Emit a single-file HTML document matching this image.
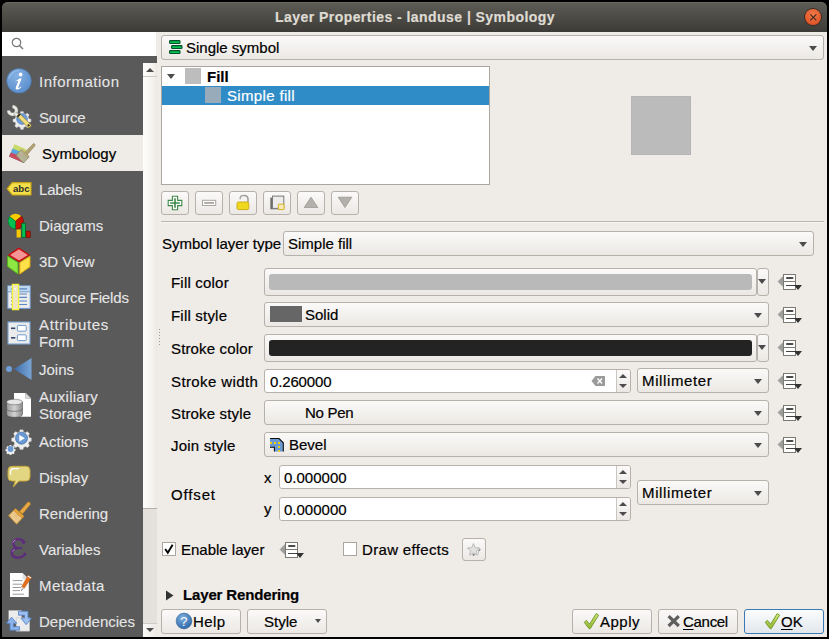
<!DOCTYPE html>
<html><head><meta charset="utf-8">
<style>
html,body{margin:0;padding:0;}
body{width:829px;height:639px;background:#000;position:relative;overflow:hidden;font-family:"Liberation Sans",sans-serif;font-size:15px;color:#000;}
.a{position:absolute;}
.t{position:absolute;line-height:20px;white-space:nowrap;-webkit-text-stroke:0.2px currentColor;}
.st{position:absolute;line-height:20px;white-space:nowrap;color:#e6e6e6;-webkit-text-stroke:0.1px currentColor;}
.btn{position:absolute;box-sizing:border-box;border:1px solid #b6b1aa;border-radius:3px;background:linear-gradient(#fbfaf9,#ebe8e4);}
.fld{position:absolute;box-sizing:border-box;border:1px solid #b6b1aa;border-radius:3px;background:#fff;}
.dd{position:absolute;width:0;height:0;border-left:4px solid transparent;border-right:4px solid transparent;border-top:5px solid #4c4c4c;}
u{text-underline-offset:2px;text-decoration-thickness:1px;}
.du{position:absolute;width:0;height:0;border-left:4px solid transparent;border-right:4px solid transparent;border-bottom:5px solid #4c4c4c;}
</style></head><body>
<div class="a" style="left:2px;top:20px;width:825px;height:617px;background:#efebe7;"></div>
<div class="a" style="left:2px;top:2px;width:825px;height:30px;background:linear-gradient(#5e5c55,#3c3b37);border-radius:6px 6px 0 0;box-shadow:inset 0 1px 0 #6a6860;"></div>
<div class="t" style="left:275px;top:7px;font-weight:bold;font-size:14px;letter-spacing:0.45px;color:#dfdbd2;">Layer Properties - landuse | Symbology</div>
<div class="a" style="left:804.5px;top:8.7px;width:16.6px;height:16.6px;border-radius:50%;background:radial-gradient(circle at 50% 35%,#f07a4a,#d9461a);box-shadow:0 0 0 1px #3a2a22;"></div>
<svg class="a" style="left:804.5px;top:8.7px" width="17" height="17"><path d="M5.3 5.3L11.3 11.3M11.3 5.3L5.3 11.3" stroke="#3b2a1f" stroke-width="1.1"/></svg>
<div class="a" style="left:2px;top:32px;width:154px;height:24px;background:#fff;"></div>
<svg class="a" style="left:11px;top:37px" width="14" height="14"><circle cx="5.5" cy="5.5" r="4.2" fill="none" stroke="#777" stroke-width="1.2"/><path d="M8.5 8.5L12 12" stroke="#777" stroke-width="1.5"/></svg>
<div class="a" style="left:2px;top:56px;width:155px;height:581px;background:#5a5a5a;"></div>

<div class="st" style="left:39px;top:72px;letter-spacing:0.5px">Information</div>
<svg class="a" style="left:4px;top:66px" width="32" height="32" viewBox="0 0 32 32"><defs><radialGradient id="gi" cx="40%" cy="30%" r="70%"><stop offset="0" stop-color="#86b1e3"/><stop offset="1" stop-color="#5b8fcd"/></radialGradient></defs>
<circle cx="15" cy="14.8" r="12.3" fill="url(#gi)" stroke="#4a78b0" stroke-width="0.6"/>
<path d="M5 13 A10 10 0 0 1 15 4.5" fill="none" stroke="#a9c8ee" stroke-width="1.2" opacity="0.8"/>
<circle cx="16.6" cy="8.5" r="1.9" fill="#fff"/>
<path d="M11.2 15.6 L15.6 12.6 L17.6 12.6 L14.3 21.2 Q14 22.4 15.2 21.8 L17.3 20.3 L17.1 21.4 Q14.6 23.8 12.4 23.6 Q11.2 23.3 11.8 21.5 L14.2 15.2 Q14 14.5 13 15 Z" fill="#fff"/></svg>
<div class="st" style="left:39px;top:108px;letter-spacing:-0.2px">Source</div>
<svg class="a" style="left:4px;top:102px" width="32" height="32" viewBox="0 0 32 32"><g transform="translate(18 17)"><path transform="scale(0.8)" d="M-1.6 -9.5h3.2l0.6 2.6 2.3 1 2.3-1.4 2.3 2.3-1.4 2.3 1 2.3 2.6 0.6v3.2l-2.6 0.6-1 2.3 1.4 2.3-2.3 2.3-2.3-1.4-2.3 1-0.6 2.6h-3.2l-0.6-2.6-2.3-1-2.3 1.4-2.3-2.3 1.4-2.3-1-2.3-2.6-0.6v-3.2l2.6-0.6 1-2.3-1.4-2.3 2.3-2.3 2.3 1.4 2.3-1z" fill="#ececec" stroke="#bdbdbd" stroke-width="0.5"/>
<circle r="5.4" fill="#6c9bd6" stroke="#4f7fbd" stroke-width="0.6"/></g>
<path d="M8.6 4.6 A3.9 3.9 0 1 1 4.6 8.6" fill="none" stroke="#9a9a94" stroke-width="3.6"/><path d="M8.6 4.6 A3.9 3.9 0 1 1 4.6 8.6" fill="none" stroke="#ecece6" stroke-width="2.6"/><path d="M10.8 10.8 L14 14" stroke="#9a9a94" stroke-width="3.6"/><path d="M10.8 10.8 L14 14" stroke="#e6e6e0" stroke-width="2.6"/>
<path d="M12.8 14.2 L15.6 11.4 L27.3 23.1 Q27 25.6 24.5 25.9 Z" fill="#f2dc7a" stroke="#8a7a35" stroke-width="0.7"/>
<path d="M12.8 14.2 L15.6 11.4 L16.8 12.6 L14 15.4Z" fill="#2a2a2a"/>
<circle cx="24.6" cy="23.4" r="1.1" fill="#222"/></svg>
<div class="a" style="left:2px;top:135px;width:141px;height:36px;background:#efebe7;"></div>
<div class="t" style="left:42px;top:144px;">Symbology</div>
<svg class="a" style="left:4px;top:138px" width="32" height="32" viewBox="0 0 32 32"><path d="M10.5 6.3 L22.5 11.5 L19.3 24.8 L5 18.5 Z" fill="#c9d96a"/>
<path d="M8.6 10.4 L21.4 15.8 L19.3 24.8 L5 18.5 Z" fill="#5ba6e0"/>
<path d="M6.9 14.4 L20.2 20 L19.3 24.8 L5 18.5 Z" fill="#cc4a5e"/>
<defs><pattern id="pchk" width="1.6" height="1.6" patternUnits="userSpaceOnUse" patternTransform="rotate(45)"><rect width="1.6" height="1.6" fill="#bcb99c"/><rect width="0.8" height="0.8" fill="#9e9b7e"/></pattern></defs><path d="M11.8 17.2 L17.2 11.8 L25.2 18.8 L19.4 25 Z" fill="url(#pchk)" stroke="#7e7a5c" stroke-width="0.7"/>
<path d="M16.5 12.5 L18 11 L25 17.8 L23.8 19.4Z" fill="#b5a777"/>
<path d="M21.2 14.2 L29.6 5.4 Q31.4 6 31 7.6 L23.6 16.2Z" fill="#b3a374" stroke="#8d7f52" stroke-width="0.6"/></svg>
<div class="st" style="left:39px;top:180px;letter-spacing:-0.2px">Labels</div>
<svg class="a" style="left:4px;top:174px" width="32" height="32" viewBox="0 0 32 32"><path d="M3.2 14.7 L8.3 8.6 H27 V21 H8.3 Z" fill="#f4df4a" stroke="#c9a514" stroke-width="1.1"/>
<text x="9" y="18" font-family="Liberation Sans" font-weight="bold" font-size="9.6" fill="#2b2b2b" letter-spacing="0">abc</text></svg>
<div class="st" style="left:39px;top:216px;letter-spacing:0px">Diagrams</div>
<svg class="a" style="left:4px;top:210px" width="32" height="32" viewBox="0 0 32 32"><path d="M11.5 11.2 L5.5 6.6 A8 8 0 0 1 17.6 6.2 Z" fill="#f8cc00"/>
<path d="M11.5 11.2 L17.6 6.2 A8 8 0 0 1 11.4 19.2 Z" fill="#c61200" stroke="#7a0a00" stroke-width="0.7"/>
<path d="M11.5 11.2 L11.4 19.2 A8 8 0 0 1 5.5 6.6 Z" fill="#00c050" stroke="#0a6a2a" stroke-width="0.7"/>
<rect x="12.6" y="19.5" width="4.2" height="8" fill="#f8c800"/>
<rect x="17.8" y="13.2" width="3.8" height="14.3" fill="#00c050" stroke="#0a5a28" stroke-width="0.8"/>
<rect x="22.2" y="21.2" width="4" height="6.3" fill="#c61200" stroke="#7a0a00" stroke-width="0.7"/></svg>
<div class="st" style="left:39px;top:252px;letter-spacing:0px">3D View</div>
<svg class="a" style="left:4px;top:246px" width="32" height="32" viewBox="0 0 32 32"><path d="M14.8 2.4 L25 9 L15 15.4 L5 9 Z" fill="#f49494" stroke="#cc0a0a" stroke-width="1.3"/>
<path d="M3.6 10.2 L14 16.5 V28 L3.6 20.5Z" fill="#8ee844" stroke="#55b015" stroke-width="1"/>
<path d="M15.8 16.5 L26 10.2 V20.8 L15.8 28Z" fill="#ffe24a" stroke="#d9a80c" stroke-width="1"/></svg>
<div class="st" style="left:39px;top:288px;letter-spacing:-0.15px">Source Fields</div>
<svg class="a" style="left:4px;top:282px" width="32" height="32" viewBox="0 0 32 32"><rect x="3.8" y="3.8" width="22.4" height="22.6" fill="#ececec" stroke="#6f9bd0" stroke-width="1"/>
<rect x="4.3" y="4.3" width="21.4" height="5.2" fill="#bcd8ee"/>
<path d="M4 9.8 H26" stroke="#6f9bd0" stroke-width="1"/>
<path d="M7 6.9H23M7 12H23M7 15.4H23M7 19H23M7 22.5H23" stroke="#5b86c2" stroke-width="1.1"/>
<rect x="8.4" y="2.4" width="6.2" height="25.2" fill="#efe6bf" stroke="#f8f43a" stroke-width="1.3"/>
<circle cx="11.4" cy="6.8" r="0.9" fill="#fff"/></svg>
<div class="st" style="left:39px;top:316px;line-height:17px;"><span style="letter-spacing:0.65px">Attributes</span><br><span style="letter-spacing:0px">Form</span></div>
<svg class="a" style="left:4px;top:318px" width="32" height="32" viewBox="0 0 32 32"><rect x="4" y="4" width="22" height="22" fill="#ececec" stroke="#7aa3d3" stroke-width="1.1"/>
<rect x="7" y="9.5" width="4.3" height="1.6" fill="#33486a"/>
<rect x="7" y="19" width="4.3" height="1.6" fill="#33486a"/>
<rect x="13.4" y="7.4" width="8.8" height="5.8" rx="0.8" fill="#fff" stroke="#5f8fc8" stroke-width="0.9"/>
<rect x="13.4" y="16.8" width="8.8" height="5.8" rx="0.8" fill="#fff" stroke="#5f8fc8" stroke-width="0.9"/></svg>
<div class="st" style="left:39px;top:360px;letter-spacing:0px">Joins</div>
<svg class="a" style="left:4px;top:354px" width="32" height="32" viewBox="0 0 32 32"><defs><linearGradient id="gj" x1="0" x2="1"><stop offset="0" stop-color="#3f6ba6"/><stop offset="1" stop-color="#78a6d8"/></linearGradient></defs>
<circle cx="5" cy="15" r="3" fill="#6e9fd8"/>
<path d="M10 15 L27.5 4 V26 Z" fill="url(#gj)"/></svg>
<div class="st" style="left:39px;top:388px;line-height:17px;"><span style="letter-spacing:0.25px">Auxiliary</span><br><span style="letter-spacing:0px">Storage</span></div>
<svg class="a" style="left:4px;top:390px" width="32" height="32" viewBox="0 0 32 32"><path d="M10 3 H21.5 L27 8.5 V26.8 H10Z" fill="#fff"/>
<path d="M21.5 3 V8.5 H27Z" fill="#d9d9d9" stroke="#aaa" stroke-width="0.5"/>
<defs><linearGradient id="gd" x1="0" x2="1"><stop offset="0" stop-color="#9a9a9a"/><stop offset="0.5" stop-color="#d2d2d2"/><stop offset="1" stop-color="#8a8a8a"/></linearGradient></defs>
<path d="M2.6 12 V24 Q2.6 27.3 10.5 27.3 Q18.5 27.3 18.5 24 V12Z" fill="url(#gd)" stroke="#444" stroke-width="0.5"/>
<ellipse cx="10.5" cy="12" rx="8" ry="2.8" fill="#e6e6e6" stroke="#555" stroke-width="0.5"/>
<path d="M2.6 18.5 Q2.6 21.3 10.5 21.3 Q18.5 21.3 18.5 18.5" fill="none" stroke="#555" stroke-width="0.6"/></svg>
<div class="st" style="left:39px;top:432px;letter-spacing:0px">Actions</div>
<svg class="a" style="left:4px;top:426px" width="32" height="32" viewBox="0 0 32 32"><g transform="translate(17.5 12.2)"><path transform="scale(0.8)" d="M-2 -10.5h4l0.5 2.6 2.6 1.1 2.2-1.5 2.8 2.8-1.5 2.2 1.1 2.6 2.6 0.5v4l-2.6 0.5-1.1 2.6 1.5 2.2-2.8 2.8-2.2-1.5-2.6 1.1-0.5 2.6h-4l-0.5-2.6-2.6-1.1-2.2 1.5-2.8-2.8 1.5-2.2-1.1-2.6-2.6-0.5v-4l2.6-0.5 1.1-2.6-1.5-2.2 2.8-2.8 2.2 1.5 2.6-1.1z" fill="#eeeeee" stroke="#c0c0c0" stroke-width="0.5"/>
<circle r="6" fill="#6a9ad3" stroke="#3f6aa0" stroke-width="0.7"/>
<path d="M-2.2 -3.2 L3.4 0 L-2.2 3.2Z" fill="#fff"/></g>
<g transform="translate(6.5 23)"><path transform="scale(0.85)" d="M-1 -4.6h2l0.3 1.2 1.2 0.5 1-0.7 1.4 1.4-0.7 1 0.5 1.2 1.2 0.3v2l-1.2 0.3-0.5 1.2 0.7 1-1.4 1.4-1-0.7-1.2 0.5-0.3 1.2h-2l-0.3-1.2-1.2-0.5-1 0.7-1.4-1.4 0.7-1-0.5-1.2-1.2-0.3v-2l1.2-0.3 0.5-1.2-0.7-1 1.4-1.4 1 0.7 1.2-0.5z" fill="#eee"/>
<circle r="2.9" fill="#6a9ad3"/></g></svg>
<div class="st" style="left:39px;top:468px;letter-spacing:0px">Display</div>
<svg class="a" style="left:4px;top:462px" width="32" height="32" viewBox="0 0 32 32"><path d="M8 4.3 H22 Q26 4.3 26 8.3 V15 Q26 19 22 19 H15 L9.3 25 L11.3 19 H8 Q4 19 4 15 V8.3 Q4 4.3 8 4.3Z" fill="#e2d682" stroke="#c9a83a" stroke-width="1"/>
<path d="M6.6 12.8 V9.4 Q6.6 6.8 9.6 6.6 H14.8" fill="none" stroke="#fff" stroke-width="1.1"/></svg>
<div class="st" style="left:39px;top:504px;letter-spacing:0px">Rendering</div>
<svg class="a" style="left:4px;top:498px" width="32" height="32" viewBox="0 0 32 32"><defs><pattern id="pchk2" width="1.6" height="1.6" patternUnits="userSpaceOnUse" patternTransform="rotate(45)"><rect width="1.6" height="1.6" fill="#f0d29a"/><rect width="0.8" height="0.8" fill="#d9a45a"/></pattern></defs>
<path d="M15.6 13.6 L24 4 Q26.4 3.8 26.4 6.2 L18.6 15.8Z" fill="#e8a844" stroke="#c98a20" stroke-width="0.6"/>
<path d="M4.5 17.6 L11.2 11 L19.6 18.6 L12.6 26.2Z" fill="url(#pchk2)" stroke="#c98a20" stroke-width="0.8"/>
<path d="M9.6 12.6 L11.6 10.6 L19.9 18 L18 20.2Z" fill="#e2a23e" stroke="#c98a20" stroke-width="0.5"/></svg>
<div class="st" style="left:39px;top:540px;letter-spacing:0px">Variables</div>
<svg class="a" style="left:4px;top:534px" width="32" height="32" viewBox="0 0 32 32"><path d="M19.8 8.6 Q18.6 5.2 14.5 5.2 Q9.2 5.4 9.4 9.6 Q9.8 13.3 13.2 13.9 L17.8 14.1" fill="none" stroke="#5e2c7e" stroke-width="2.2"/>
<path d="M13.2 14.3 Q7.6 15 7.8 19.2 Q8.2 23.6 13.8 23.6 Q19.2 23.6 21.2 19.8" fill="none" stroke="#5e2c7e" stroke-width="2.4"/>
<circle cx="19.6" cy="8.2" r="1.7" fill="#5e2c7e"/><circle cx="20.8" cy="19.8" r="1.4" fill="#5e2c7e"/>
<path d="M9 8.5 Q9.8 6.5 11.5 6" stroke="#c09ad8" stroke-width="0.9" fill="none"/><path d="M8.6 17.5 Q9.2 16 10.5 15.5" stroke="#c09ad8" stroke-width="0.9" fill="none"/></svg>
<div class="st" style="left:39px;top:576px;letter-spacing:0.4px">Metadata</div>
<svg class="a" style="left:4px;top:570px" width="32" height="32" viewBox="0 0 32 32"><path d="M6 3 H18.5 L24.8 9.3 V27 H6Z" fill="#fff"/>
<path d="M18.5 3 V9.3 H24.8Z" fill="#e0e0e0"/>
<path d="M8.6 10.6H18.5M8.6 14.2H18M8.6 17.5H17M8.6 20.6H16M8.6 24.2H20" stroke="#9a9a9a" stroke-width="1"/>
<path d="M24 5.4 L27.4 7.4 L20.3 18.3 L17.6 16.7Z" fill="#e2701e" stroke="#c95a10" stroke-width="0.5"/><path d="M24 5.4 L27.4 7.4 L26.8 8.4 L23.4 6.4Z" fill="#eee"/>
<path d="M17.6 16.7 L20.3 18.3 L17.3 21 Z" fill="#c8c8c8"/>
<path d="M17.4 20.6 L18.2 19.4" stroke="#333" stroke-width="0.8"/></svg>
<div class="st" style="left:39px;top:612px;letter-spacing:0px">Dependencies</div>
<svg class="a" style="left:4px;top:606px" width="32" height="32" viewBox="0 0 32 32"><g transform="translate(0 -1.8)"><rect x="4.6" y="6.2" width="13" height="13" fill="#ececec"/>
<rect x="12.2" y="13.6" width="13.3" height="13.3" fill="#ececec" stroke="#c8c8c8" stroke-width="0.6"/>
<path d="M14.5 7 H24 V14 H27.5 L22.2 20.5 L17 14 H20.5 V11 H14.5Z" fill="#9dbff0" stroke="#4f7fc4" stroke-width="0.8"/>
<path d="M15.5 26 H6 V19 H2.5 L7.6 13 L12.7 19 H9.4 V22.5 H15.5Z" fill="#8cb4ea" stroke="#4f7fc4" stroke-width="0.8"/></g></svg>
<div class="a" style="left:143px;top:63px;width:14px;height:574px;background:#e4e1dd;"></div>
<div class="a" style="left:143px;top:63px;width:14px;height:446px;background:linear-gradient(90deg,#fefefd,#f6f4f1 60%,#ebe8e4);box-sizing:border-box;border-bottom:1px solid #b3b0ab"></div>
<div class="a" style="left:143px;top:624px;width:14px;height:13px;background:linear-gradient(90deg,#fbfaf9,#ece9e5);"></div>
<div class="a" style="left:143px;top:76px;width:14px;height:1px;background:#cfcbc6;"></div>
<div class="du" style="left:146px;top:68px;border-bottom-width:4px;"></div>
<div class="a" style="left:143px;top:623px;width:14px;height:1px;background:#cfcbc6;"></div>
<div class="dd" style="left:146px;top:628px;border-top-width:4px;"></div>
<div class="a" style="left:159px;top:329px;width:1px;height:1px;background:#9a9894;"></div>
<div class="a" style="left:159px;top:332px;width:1px;height:1px;background:#9a9894;"></div>
<div class="a" style="left:159px;top:335px;width:1px;height:1px;background:#9a9894;"></div>
<div class="a" style="left:159px;top:338px;width:1px;height:1px;background:#9a9894;"></div>
<div class="a" style="left:159px;top:341px;width:1px;height:1px;background:#9a9894;"></div>
<div class="a" style="left:159px;top:344px;width:1px;height:1px;background:#9a9894;"></div>
<div class="btn" style="left:161px;top:35px;width:663px;height:25px;"></div>
<svg class="a" style="left:169px;top:40px" width="14" height="15"><rect x="0.6" y="0.6" width="10.4" height="2.9" rx="0.8" fill="#08c152" stroke="#06502a" stroke-width="1.1"/><rect x="2.6" y="5.6" width="10.4" height="2.9" rx="0.8" fill="#08c152" stroke="#06502a" stroke-width="1.1"/><rect x="0.6" y="10.6" width="10.4" height="2.9" rx="0.8" fill="#08c152" stroke="#06502a" stroke-width="1.1"/></svg>
<div class="t" style="left:186px;top:38px;">Single symbol</div>
<div class="dd" style="left:809px;top:46px;"></div>
<div class="a" style="left:161px;top:66px;width:329px;height:119px;background:#fff;border:1px solid #aaa6a0;box-sizing:border-box;"></div>
<div class="dd" style="left:167px;top:74px;border-left-width:4.5px;border-right-width:4.5px;border-top-width:5px;"></div>
<div class="a" style="left:185px;top:68px;width:16px;height:16px;background:#bdbdbd;"></div>
<div class="t" style="left:207px;top:67px;"><b>Fill</b></div>
<div class="a" style="left:162px;top:86px;width:327px;height:19px;background:#308cc6;"></div>
<div class="a" style="left:205px;top:87px;width:16px;height:16px;background:#97abbb;"></div>
<div class="t" style="left:227px;top:86px;color:#fff;letter-spacing:0.34px;">Simple fill</div>
<div class="a" style="left:631px;top:96px;width:60px;height:59px;background:#bbbbbb;box-shadow:inset 0 0 0 1px #b6b4b6;"></div>
<div class="btn" style="left:161px;top:191px;width:28px;height:24px;"></div>
<svg class="a" style="left:161px;top:191px" width="28" height="24"><path d="M11.4 5.2H16.6V9.4H20.8V14.6H16.6V18.8H11.4V14.6H7.2V9.4H11.4Z" fill="#fff" stroke="#3d8a48" stroke-width="1.1"/><path d="M14 7.2V16.8M9.2 12H18.8" stroke="#3d8a48" stroke-width="1.6"/></svg>
<div class="btn" style="left:195px;top:191px;width:28px;height:24px;"></div>
<svg class="a" style="left:195px;top:191px" width="28" height="24"><rect x="7.5" y="9.3" width="13.2" height="5.2" fill="#fff" stroke="#a9a6a2" stroke-width="1"/><rect x="9.2" y="11" width="9.8" height="1.8" fill="#aaa7a3"/></svg>
<div class="btn" style="left:229px;top:191px;width:28px;height:24px;"></div>
<svg class="a" style="left:229px;top:191px" width="28" height="24"><path d="M11.2 8.3 Q11 4.4 15 4.4 Q19 4.4 19 8.2 V11" fill="none" stroke="#9a9a9a" stroke-width="1.5"/><path d="M11.7 7.8 Q11.7 5 15 5" fill="none" stroke="#e8e8e8" stroke-width="0.6"/><rect x="8" y="11" width="11.8" height="7.6" rx="1.5" fill="#f0d81e" stroke="#c9a80a" stroke-width="0.9"/></svg>
<div class="btn" style="left:263px;top:191px;width:28px;height:24px;"></div>
<svg class="a" style="left:263px;top:191px" width="28" height="24"><rect x="7.3" y="6.6" width="11.5" height="11.7" fill="#6e6e6e"/><rect x="9.5" y="5.1" width="11.3" height="12.3" fill="#ececec" stroke="#7a7a7a" stroke-width="1"/><rect x="15.3" y="13.2" width="5.8" height="5.4" rx="0.6" fill="#f6eab8" stroke="#d9b21a" stroke-width="1"/></svg>
<div class="btn" style="left:297px;top:191px;width:28px;height:24px;"></div>
<svg class="a" style="left:297px;top:191px" width="28" height="24"><path d="M14 6.2 L20.8 16.5 H7.2Z" fill="#b3afab" stroke="#9c9894" stroke-width="0.8"/></svg>
<div class="btn" style="left:331px;top:191px;width:28px;height:24px;"></div>
<svg class="a" style="left:331px;top:191px" width="28" height="24"><path d="M7.2 6.2 H20.8 L14 16.6Z" fill="#b3afab" stroke="#9c9894" stroke-width="0.8"/></svg>
<div class="a" style="left:161px;top:221px;width:663px;height:1px;background:#b9b5ae;"></div>
<div class="a" style="left:161px;top:222px;width:663px;height:1px;background:#f8f7f5;"></div>
<div class="t" style="left:162px;top:234px;">Symbol layer type</div>
<div class="btn" style="left:283px;top:231px;width:531px;height:25px;"></div>
<div class="t" style="left:288px;top:234px;">Simple fill</div>
<div class="dd" style="left:799px;top:242px;"></div>
<div class="t" style="left:171px;top:273px;letter-spacing:0.2px;">Fill color</div>
<div class="t" style="left:171px;top:306px;letter-spacing:0.2px;">Fill style</div>
<div class="t" style="left:171px;top:339px;letter-spacing:0.15px;">Stroke color</div>
<div class="t" style="left:171px;top:372px;letter-spacing:0.4px;">Stroke width</div>
<div class="t" style="left:171px;top:404px;letter-spacing:0.15px;">Stroke style</div>
<div class="t" style="left:171px;top:436px;letter-spacing:0.2px;">Join style</div>
<div class="btn" style="left:264px;top:268px;width:493px;height:28px;"></div>
<div class="a" style="left:269px;top:274px;width:483px;height:16px;background:#b9b9b9;border-radius:3px;"></div>
<div class="btn" style="left:757px;top:268px;width:12px;height:28px;"></div>
<div class="dd" style="left:758px;top:279px;border-left-width:4.5px;border-right-width:4.5px;"></div>
<div class="btn" style="left:264px;top:302px;width:505px;height:25px;"></div>
<div class="a" style="left:270px;top:306px;width:32px;height:16px;background:#666666;"></div>
<div class="t" style="left:305px;top:305px;">Solid</div>
<div class="dd" style="left:754px;top:313px;"></div>
<div class="btn" style="left:264px;top:334px;width:493px;height:28px;"></div>
<div class="a" style="left:269px;top:340px;width:483px;height:16px;background:#232323;border-radius:3px;"></div>
<div class="btn" style="left:757px;top:334px;width:12px;height:28px;"></div>
<div class="dd" style="left:758px;top:345px;border-left-width:4.5px;border-right-width:4.5px;"></div>
<div class="fld" style="left:264px;top:369px;width:367px;height:24px;"></div>
<div class="t" style="left:270px;top:372px;letter-spacing:-0.15px;">0.260000</div>
<svg class="a" style="left:591px;top:375px" width="15" height="12"><path d="M0.5 6L4.5 1H14V11H4.5Z" fill="#9a9a9a"/><path d="M6.5 3.5L11 8.5M11 3.5L6.5 8.5" stroke="#fff" stroke-width="1.3"/></svg>
<div class="a" style="left:616px;top:370px;width:13px;height:22px;background:linear-gradient(#fbfaf9,#ebe8e4);border-left:1px solid #c9c5bf;border-radius:0 2px 2px 0;"></div>
<div class="du" style="left:619px;top:374px;border-bottom-width:4px;"></div>
<div class="dd" style="left:619px;top:384px;border-top-width:4px;"></div>
<div class="btn" style="left:637px;top:368px;width:132px;height:25px;"></div>
<div class="t" style="left:642px;top:371px;letter-spacing:0.63px;">Millimeter</div>
<div class="dd" style="left:754px;top:379px;"></div>
<div class="btn" style="left:264px;top:400px;width:505px;height:25px;"></div>
<div class="t" style="left:305px;top:403px;letter-spacing:-0.3px;">No Pen</div>
<div class="dd" style="left:754px;top:411px;"></div>
<div class="btn" style="left:264px;top:432px;width:505px;height:25px;"></div>
<svg class="a" style="left:266px;top:435px" width="24" height="20"><path d="M4 3.3H13L17.5 7.8V16.6H8.4V12.5H4Z" fill="#6a98d0"/><path d="M4 3.5H13L17.3 7.8V16.6M4 12.3H8.4V16.6" fill="none" stroke="#111" stroke-width="1.1"/><g fill="#f4d000"><rect x="4" y="7" width="2" height="2"/><rect x="8" y="7" width="2" height="2"/><rect x="12" y="7" width="2" height="2"/><rect x="12" y="11" width="2" height="2"/><rect x="12" y="15" width="2" height="1.6"/></g></svg>
<div class="t" style="left:289px;top:435px;">Bevel</div>
<div class="dd" style="left:754px;top:443px;"></div>
<svg class="a" style="left:774px;top:270px" width="32" height="24"><path d="M4 11.5L9.5 6V17Z" fill="#9d9d9d" stroke="#8a8a8a" stroke-width="0.5"/><rect x="9.5" y="4.5" width="12" height="15" fill="#fff" stroke="#7a7a72"/><path d="M9.5 11.5H21.5" stroke="#7a7a72"/><rect x="12" y="7" width="7.5" height="2" rx="1" fill="#4a4a4a"/><path d="M12 15.5H21" stroke="#444"/><path d="M20 15H28L24 20Z" fill="#333"/></svg>
<svg class="a" style="left:774px;top:303px" width="32" height="24"><path d="M4 11.5L9.5 6V17Z" fill="#9d9d9d" stroke="#8a8a8a" stroke-width="0.5"/><rect x="9.5" y="4.5" width="12" height="15" fill="#fff" stroke="#7a7a72"/><path d="M9.5 11.5H21.5" stroke="#7a7a72"/><rect x="12" y="7" width="7.5" height="2" rx="1" fill="#4a4a4a"/><path d="M12 15.5H21" stroke="#444"/><path d="M20 15H28L24 20Z" fill="#333"/></svg>
<svg class="a" style="left:774px;top:336px" width="32" height="24"><path d="M4 11.5L9.5 6V17Z" fill="#9d9d9d" stroke="#8a8a8a" stroke-width="0.5"/><rect x="9.5" y="4.5" width="12" height="15" fill="#fff" stroke="#7a7a72"/><path d="M9.5 11.5H21.5" stroke="#7a7a72"/><rect x="12" y="7" width="7.5" height="2" rx="1" fill="#4a4a4a"/><path d="M12 15.5H21" stroke="#444"/><path d="M20 15H28L24 20Z" fill="#333"/></svg>
<svg class="a" style="left:774px;top:369px" width="32" height="24"><path d="M4 11.5L9.5 6V17Z" fill="#9d9d9d" stroke="#8a8a8a" stroke-width="0.5"/><rect x="9.5" y="4.5" width="12" height="15" fill="#fff" stroke="#7a7a72"/><path d="M9.5 11.5H21.5" stroke="#7a7a72"/><rect x="12" y="7" width="7.5" height="2" rx="1" fill="#4a4a4a"/><path d="M12 15.5H21" stroke="#444"/><path d="M20 15H28L24 20Z" fill="#333"/></svg>
<svg class="a" style="left:774px;top:401px" width="32" height="24"><path d="M4 11.5L9.5 6V17Z" fill="#9d9d9d" stroke="#8a8a8a" stroke-width="0.5"/><rect x="9.5" y="4.5" width="12" height="15" fill="#fff" stroke="#7a7a72"/><path d="M9.5 11.5H21.5" stroke="#7a7a72"/><rect x="12" y="7" width="7.5" height="2" rx="1" fill="#4a4a4a"/><path d="M12 15.5H21" stroke="#444"/><path d="M20 15H28L24 20Z" fill="#333"/></svg>
<svg class="a" style="left:774px;top:433px" width="32" height="24"><path d="M4 11.5L9.5 6V17Z" fill="#9d9d9d" stroke="#8a8a8a" stroke-width="0.5"/><rect x="9.5" y="4.5" width="12" height="15" fill="#fff" stroke="#7a7a72"/><path d="M9.5 11.5H21.5" stroke="#7a7a72"/><rect x="12" y="7" width="7.5" height="2" rx="1" fill="#4a4a4a"/><path d="M12 15.5H21" stroke="#444"/><path d="M20 15H28L24 20Z" fill="#333"/></svg>
<div class="t" style="left:171px;top:484.5px;letter-spacing:0.85px;">Offset</div>
<div class="t" style="left:264px;top:468px;">x</div>
<div class="t" style="left:264px;top:499px;">y</div>
<div class="fld" style="left:279px;top:465px;width:352px;height:24px;"></div>
<div class="fld" style="left:279px;top:497px;width:352px;height:24px;"></div>
<div class="t" style="left:284px;top:468px;">0.000000</div>
<div class="t" style="left:284px;top:500px;">0.000000</div>
<div class="a" style="left:616px;top:466px;width:13px;height:22px;background:linear-gradient(#fbfaf9,#ebe8e4);border-left:1px solid #c9c5bf;border-radius:0 2px 2px 0;"></div>
<div class="du" style="left:619px;top:470px;border-bottom-width:4px;"></div>
<div class="dd" style="left:619px;top:480px;border-top-width:4px;"></div>
<div class="a" style="left:616px;top:498px;width:13px;height:22px;background:linear-gradient(#fbfaf9,#ebe8e4);border-left:1px solid #c9c5bf;border-radius:0 2px 2px 0;"></div>
<div class="du" style="left:619px;top:502px;border-bottom-width:4px;"></div>
<div class="dd" style="left:619px;top:512px;border-top-width:4px;"></div>
<div class="btn" style="left:637px;top:480px;width:132px;height:25px;"></div>
<div class="t" style="left:642px;top:483px;letter-spacing:0.63px;">Millimeter</div>
<div class="dd" style="left:754px;top:491px;"></div>
<div class="a" style="left:162px;top:542px;width:14px;height:14px;background:#fff;border:1px solid #aaa59e;box-sizing:border-box;"></div>
<svg class="a" style="left:162px;top:542px" width="14" height="14"><path d="M3.2 7L5.8 10.8L10.6 2.8" fill="none" stroke="#000" stroke-width="1.9"/></svg>
<div class="t" style="left:181px;top:540px;">Enable layer</div>
<svg class="a" style="left:276px;top:538px" width="32" height="24"><path d="M4 11.5L9.5 6V17Z" fill="#9d9d9d" stroke="#8a8a8a" stroke-width="0.5"/><rect x="9.5" y="4.5" width="12" height="15" fill="#fff" stroke="#7a7a72"/><path d="M9.5 11.5H21.5" stroke="#7a7a72"/><rect x="12" y="7" width="7.5" height="2" rx="1" fill="#4a4a4a"/><path d="M12 15.5H21" stroke="#444"/><path d="M20 15H28L24 20Z" fill="#333"/></svg>
<div class="a" style="left:343px;top:542px;width:14px;height:14px;background:#fff;border:1px solid #aaa59e;box-sizing:border-box;"></div>
<div class="t" style="left:362px;top:540px;letter-spacing:0.33px;">Draw effects</div>
<div class="btn" style="left:462px;top:538px;width:24px;height:23px;"></div>
<svg class="a" style="left:466px;top:542px" width="16" height="16"><path d="M7.5 1.5L9.3 5.7L13.8 6L10.3 8.9L11.4 13.3L7.5 10.9L3.6 13.3L4.7 8.9L1.2 6L5.7 5.7Z" fill="#e2e2e2" stroke="#b5b5b5" stroke-width="0.9"/><path d="M12.6 7.5L15 7.2L13 9.5L12.6 13.5Z" fill="#777"/><path d="M6.5 12L9.5 12.8L7 14Z" fill="#666"/></svg>
<svg class="a" style="left:165px;top:590px" width="10" height="11"><path d="M1 0.5L8.5 5.5L1 10.5Z" fill="#333"/></svg>
<div class="t" style="left:183px;top:585px;letter-spacing:-0.15px;"><b>Layer Rendering</b></div>
<div class="btn" style="left:161px;top:609px;width:80px;height:25px;"></div>
<svg class="a" style="left:161px;top:609px" width="80" height="25"><defs><radialGradient id="ghp" cx="40%" cy="30%" r="75%"><stop offset="0" stop-color="#7eb0e0"/><stop offset="1" stop-color="#2b65a5"/></radialGradient></defs><circle cx="23" cy="12" r="7.9" fill="url(#ghp)" stroke="#2a5b92" stroke-width="0.5"/><text x="19.3" y="16.8" font-family="Liberation Sans" font-size="13" fill="#fff">?</text></svg>
<div class="t" style="left:193px;top:612px;letter-spacing:0.4px;">Help</div>
<div class="btn" style="left:247px;top:609px;width:80px;height:25px;"></div>
<div class="t" style="left:264px;top:612px;">Style</div>
<div class="dd" style="left:315px;top:619px;border-left-width:3.5px;border-right-width:3.5px;border-top-width:4px;"></div>
<div class="btn" style="left:572px;top:609px;width:80px;height:25px;"></div>
<svg class="a" style="left:572px;top:609px" width="30" height="25"><defs><linearGradient id="gck" x1="0" y1="0" x2="0" y2="1"><stop offset="0" stop-color="#d4e87a"/><stop offset="1" stop-color="#8fb52e"/></linearGradient></defs><path d="M12.2 13.3 L14.4 11.4 L17.6 15.2 L24.2 4.6 L26.6 6.2 L18.3 19.6 L17 19.6Z" fill="url(#gck)" stroke="#6d9424" stroke-width="0.9" stroke-linejoin="round"/></svg>
<div class="t" style="left:600px;top:612px;letter-spacing:0.5px;">Apply</div>
<div class="btn" style="left:658px;top:609px;width:80px;height:25px;"></div>
<svg class="a" style="left:658px;top:609px" width="30" height="25"><path d="M10.6 7.2L20.8 17M20.8 7.2L10.6 17" stroke="#5e5e5e" stroke-width="3.2"/></svg>
<div class="t" style="left:683px;top:612px;letter-spacing:-0.3px;"><u>C</u>ancel</div>
<div class="btn" style="left:744px;top:609px;width:80px;height:25px;border-color:#3a78b6;background:linear-gradient(#fbfcfd,#e2e7ec);"></div>
<svg class="a" style="left:753px;top:609px" width="30" height="25"><defs><linearGradient id="gck" x1="0" y1="0" x2="0" y2="1"><stop offset="0" stop-color="#d4e87a"/><stop offset="1" stop-color="#8fb52e"/></linearGradient></defs><path d="M12.2 13.3 L14.4 11.4 L17.6 15.2 L24.2 4.6 L26.6 6.2 L18.3 19.6 L17 19.6Z" fill="url(#gck)" stroke="#6d9424" stroke-width="0.9" stroke-linejoin="round"/></svg>
<div class="t" style="left:781px;top:612px;"><u>O</u>K</div>
</body></html>
